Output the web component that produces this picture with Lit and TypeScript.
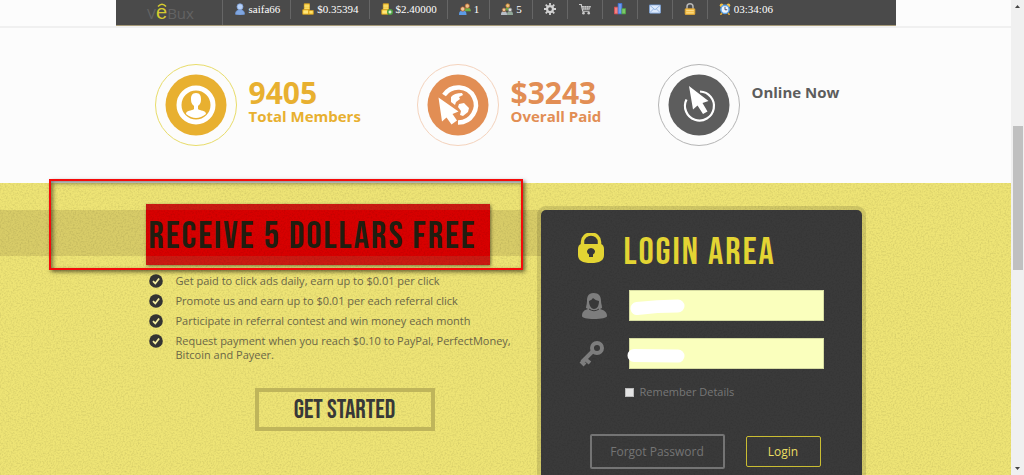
import { LitElement, html, css, svg } from "lit";
import { customElement } from "lit/decorators.js";

const icons = {
  user: svg`<path d="M2 15c0-4 2-6 6-6s6 2 6 6q-6 2-12 0z" fill="#7fa6e0" stroke="#6d95d6"/><circle cx="8" cy="5" r="4" fill="#b6d0f5" stroke="#7fa3dc"/>`,
  coins: svg`<path d="M3 1h7v8H3z" fill="#f4c834" stroke="#d9a21c"/><path d="M3 3h7M3 5h7M3 7h7" stroke="#fbe88a"/><path d="M1 9h8v6H1zM9 10h6v5H9z" fill="#ffd84a" stroke="#d9a21c"/><path d="M2 11h6M2 13h6M10 12h4" stroke="#fff0a0"/>`,
  coinsAdd: svg`<path d="M3 1h7v8H3z" fill="#f4c834" stroke="#d9a21c"/><path d="M3 3h7M3 5h7M3 7h7" stroke="#fbe88a"/><path d="M1 9h8v6H1z" fill="#ffd84a" stroke="#d9a21c"/><path d="M2 11h6M2 13h6" stroke="#fff0a0"/><circle cx="12" cy="12" r="4" fill="#4fa545"/><path d="M12 10v4M10 12h4" stroke="#fff" stroke-width="1.5"/>`,
  pair: svg`<path d="M7 11c0-3 1-5 4-5s5 2 5 5z" fill="#6cae45"/><circle cx="11" cy="4" r="3" fill="#efbd86" stroke="#a75b24"/><path d="M0 16c0-4 1-6 5-6s5 2 5 6z" fill="#5c9be6"/><circle cx="5" cy="8" r="3" fill="#f2c795" stroke="#9c4e24"/>`,
  group: svg`<path d="M5 10c0-3 1-4 4-4s4 1 4 4z" fill="#6cae45"/><circle cx="9" cy="3.500" r="2.500" fill="#efbd86" stroke="#c98a24"/><path d="M0 16c0-4 1-5 4-5s4 1 4 5z" fill="#b8bec6"/><circle cx="4" cy="9" r="2.500" fill="#f2c795" stroke="#8b5a39"/><path d="M8 16c0-4 1-5 4-5s4 1 4 5z" fill="#92a99a"/><circle cx="12" cy="9" r="2.500" fill="#ddd" stroke="#777"/>`,
  gear: svg`<circle cx="8" cy="8" r="4" fill="none" stroke="#d2d2d2" stroke-width="3"/><path d="M8 0v3M8 13v3M0 8h3M13 8h3M2.300 2.300l2.200 2.200M11.500 11.500l2.200 2.200M13.700 2.300l-2.200 2.200M4.500 11.500l-2.200 2.200" stroke="#d2d2d2" stroke-width="2.400"/>`,
  cart: svg`<path d="M0 2h3l2 9h9" fill="none" stroke="#ccc" stroke-width="1.600"/><path d="M3.500 4H16l-2 5H5z" fill="#c8c8c8"/><path d="M7 4v5M10 4v5M13 4v5M4 6.500h11" stroke="#777" stroke-width=".7"/><circle cx="6" cy="13.500" r="1.700" fill="#ccc"/><circle cx="13" cy="13.500" r="1.700" fill="#ccc"/>`,
  chart: svg`<path d="M0.500 5.500h5v9h-5z" fill="#f28080" stroke="#e04848"/><path d="M5.500 0.500h5v14h-5z" fill="#6c9cf0" stroke="#3a6fd8"/><path d="M10.500 7.500h5v7h-5z" fill="#7cc66b" stroke="#4aa53c"/>`,
  mail: svg`<rect x="0.500" y="2.500" width="15" height="11" rx="1" fill="#dce9fb" stroke="#6f9bd8"/><path d="M1 3l7 6 7-6M1 13l5-5M15 13l-5-5" fill="none" stroke="#7ea5dc"/>`,
  lock: svg`<path d="M4 8V5a4 4 0 0 1 8 0v3" fill="none" stroke="#b7b7b7" stroke-width="2"/><rect x="1.500" y="7.500" width="13" height="8" rx="1" fill="#f5c04a" stroke="#d9a034"/><path d="M3 10h10M3 13h10" stroke="#fde49a"/>`,
  clock: svg`<circle cx="3.500" cy="3" r="2.500" fill="#f2bd42"/><circle cx="12.500" cy="3" r="2.500" fill="#f2bd42"/><path d="M4 13l-2 3M12 13l2 3" stroke="#e0a530" stroke-width="2"/><circle cx="8" cy="8.500" r="5.500" fill="#eef6ff" stroke="#5aa2e6" stroke-width="2"/><path d="M8 5v4h3" fill="none" stroke="#445" stroke-width="1.200"/>`,
};

const toolbar = [
  { icon: icons.user, text: "saifa66", name: "Account" },
  { icon: icons.coins, text: "$0.35394", name: "Main balance" },
  { icon: icons.coinsAdd, text: "$2.40000", name: "Purchase balance" },
  { icon: icons.pair, text: "1", name: "Direct referrals" },
  { icon: icons.group, text: "5", name: "Rented referrals" },
  { icon: icons.gear, text: "", name: "Settings" },
  { icon: icons.cart, text: "", name: "Cart" },
  { icon: icons.chart, text: "", name: "Statistics" },
  { icon: icons.mail, text: "", name: "Messages" },
  { icon: icons.lock, text: "", name: "Log out" },
  { icon: icons.clock, text: "03:34:06", name: "Server time" },
];

const stats = [
  {
    tone: "gold",
    value: "9405",
    label: "Total Members",
    art: svg`<circle cx="41" cy="41" r="40.500" fill="none" stroke="#e8dc6a"/><circle cx="41" cy="41" r="30.500" fill="#e8b030"/><circle cx="41" cy="41" r="17" fill="none" stroke="#fff" stroke-width="5"/><path d="M41 29c-4 0-5 3-5 6 0 4 1 5 3 7v3c-2 2-8 1-8 5q5 4 10 4t10-4c0-4-6-3-8-5v-3c2-2 3-3 3-7 0-3-1-6-5-6z" fill="#fff"/>`,
  },
  {
    tone: "orange",
    value: "$3243",
    label: "Overall Paid",
    art: svg`<circle cx="41" cy="41" r="40.500" fill="none" stroke="#f4d3bd"/><circle cx="41" cy="41" r="30.500" fill="#e28e54"/><path d="M27 31A17.500 17.500 0 1 1 41 58.500" fill="none" stroke="#fff" stroke-width="4.500"/><path d="M34 33q3-4 11-4l1 2-4 2 1 2-4 3-1 3-4-3zM42 40l5-1 5 5-1 4-5 4-3-1 1-4-3-4z" fill="#fff"/><path d="M21.500 33.500l3.500 24 4.500-4 5 7 5.500-4-4.500-6.500 6-2.500z" fill="#fff"/>`,
  },
  {
    tone: "dark",
    value: "",
    label: "Online Now",
    art: svg`<circle cx="41" cy="41" r="40.500" fill="none" stroke="#b5b5b5"/><circle cx="41" cy="41" r="30.500" fill="#5d5d5d"/><path d="M42 27.500a14.500 14.500 0 1 1-13.500 8" fill="none" stroke="#fff" stroke-width="2.200"/><path d="M31 22l4 23.500 4.500-4 5.500 8.500 4.500-2.500-5-8.500 6-2z" fill="#fff"/>`,
  },
];

const benefits = [
  "Get paid to click ads daily, earn up to $0.01 per click",
  "Promote us and earn up to $0.01 per each referral click",
  "Participate in referral contest and win money each month",
  "Request payment when you reach $0.10 to PayPal, PerfectMoney, Bitcoin and Payeer.",
];

@customElement("app-root")
export class AppRoot extends LitElement {
  static styles = css`
    :host {
      --grain: url("data:image/svg+xml,%3Csvg xmlns='http://www.w3.org/2000/svg' width='160' height='160'%3E%3Cfilter id='n' x='0' y='0' width='1' height='1'%3E%3CfeTurbulence type='fractalNoise' baseFrequency='.6' numOctaves='2' stitchTiles='stitch'/%3E%3CfeColorMatrix values='0 0 0 0 0 0 0 0 0 0 0 0 0 0 0 .2 0 0 0 -.08'/%3E%3C/filter%3E%3Crect width='160' height='160' filter='url(%23n)'/%3E%3C/svg%3E");
      --display: "Bebas Neue", "Liberation Sans Narrow", "Liberation Sans", sans-serif;
      display: grid;
      grid-template-columns: minmax(0, 1fr) 13px;
      height: 100vh;
      overflow: hidden;
      font-family: "Open Sans", sans-serif;
      background: #fcfcfc;
    }
    * { box-sizing: border-box; }
    h1, h2, p, ul { margin: 0; padding: 0; }
    .page { display: flex; flex-direction: column; min-height: 0; overflow: hidden; }

    .top { border-bottom: 2px solid #f0f0f0; }
    .bar {
      display: flex;
      align-items: flex-start;
      width: 780px;
      max-width: 100%;
      height: 26px;
      margin: 0 auto;
      background: #4a4a4a;
      border-bottom: 1px solid #a69a78;
    }
    .logo {
      display: flex;
      align-items: baseline;
      justify-content: center;
      width: 107px;
      height: 25px;
      padding-left: 4px;
      border-right: 1px solid #666;
      font: 15px/26px "Open Sans", sans-serif;
      color: #636363;
      text-decoration: none;
    }
    .logo-e { position: relative; font: 20px/24px "Liberation Sans", sans-serif; color: #d6cb30; }
    .logo-hat { position: absolute; left: 1px; top: 3px; width: 10px; height: 4px; }
    .tools { display: flex; list-style: none; }
    .tool {
      display: flex;
      align-items: center;
      gap: 3px;
      height: 19px;
      padding: 0 10px 1px 11px;
      border-right: 1px solid #666;
      font: 11px/16px "Liberation Serif", serif;
      color: #fff;
    }
    .tool:last-child { border-right: 0; }
    .tool-only { padding-right: 11px; }
    .tool-icon { width: 12px; height: 12px; }
    .tool-text { padding-bottom: 1px; }

    .stats {
      display: grid;
      grid-template-columns: 262px 241px auto;
      width: 720px;
      max-width: 100%;
      margin: 0 auto;
      padding: 36px 0 37px 9px;
    }
    .stat { display: flex; gap: 12px; }
    .stat-art { width: 82px; height: 82px; flex: none; }
    .stat-text { padding-top: 13px; font-weight: 700; }
    .value { font-size: 30px; line-height: 31px; }
    .label { font-size: 15px; line-height: 16px; }
    .gold { color: #e8b030; }
    .orange { color: #e28e54; }
    .dark { color: #5d5d5d; }
    .dark .stat-text { padding-top: 20px; }

    .hero {
      position: relative;
      flex: 1;
      min-height: 0;
      background:
        var(--grain),
        linear-gradient(#d8cc68, #d8cc68) 0 27px / calc(50% + 36px) 46px no-repeat,
        #eee475;
    }
    .columns {
      display: grid;
      grid-template-columns: 391px 329px;
      justify-content: center;
      height: 100%;
    }
    .offer { padding-top: 21px; }
    .headline {
      width: 344px;
      height: 61px;
      padding-left: 3px;
      font: 400 38px/65px var(--display);
      letter-spacing: 2px;
      white-space: nowrap;
      color: #201e10;
      background: var(--grain), linear-gradient(#cb1a12 6px, #d80000 6px, #d80000 52px, #cb1a12 52px);
      box-shadow: 1px 1px 3px rgba(0, 0, 0, 0.5);
    }
    .benefits {
      display: grid;
      gap: 6px;
      padding: 9px 20px 0 3px;
      list-style: none;
      font-size: 11px;
      line-height: 14px;
      color: #6b6747;
    }
    .benefit { display: flex; gap: 13px; }
    .tick { width: 14px; height: 14px; flex: none; }
    .start {
      display: block;
      width: 180px;
      height: 43px;
      margin: 26px 0 0 109px;
      padding: 0;
      border: 4px solid #bfb55b;
      background: none;
      font: 400 26px/37px var(--display);
      white-space: nowrap;
      color: #383838;
    }
    .frame {
      position: absolute;
      left: calc(50% - 457px);
      top: -4px;
      width: 474px;
      height: 91px;
      border: 2px solid #f50a0a;
      box-shadow: 2px 2px 4px rgba(0, 0, 0, 0.55), inset 2px 2px 4px rgba(0, 0, 0, 0.5);
      pointer-events: none;
    }

    .login {
      margin: 27px 4px 0;
      padding: 23px 37px 0;
      border-radius: 5px 5px 0 0;
      background: var(--grain), #3a3a3a;
      box-shadow: 0 0 0 4px rgba(0, 0, 0, 0.12);
    }
    .login-title { display: flex; gap: 20px; align-items: flex-start; }
    .login-lock { width: 26px; height: 31px; }
    .login-name { font: 400 38px/40px var(--display); letter-spacing: 2px; color: #e3d433; white-space: nowrap; }
    .field { display: flex; align-items: center; gap: 21px; height: 31px; margin-top: 17px; padding-left: 1px; }
    .field-icon { display: block; width: 29px; height: 28px; }
    .box { position: relative; flex: 0 0 195px; height: 31px; }
    .input { width: 100%; height: 31px; border: 1px solid #d6dba1; background: #faffbd; padding: 4px; font-family: inherit; border-radius: 0; display: block; }
    .smear { position: absolute; left: -2px; top: 9px; width: 60px; height: 16px; pointer-events: none; }
    .remember { display: flex; gap: 6px; align-items: center; margin: 15px 0 0 47px; font-size: 11px; line-height: 16px; color: #777; }
    .check { appearance: none; width: 9px; height: 9px; margin: 0; background: #e4e4e4; border: 1px solid #bbb; }
    .actions { display: flex; align-items: center; gap: 21px; margin: 34px 0 0 12px; }
    .forgot {
      width: 135px;
      border: 2px solid #747474;
      border-radius: 2px;
      font-size: 12px;
      line-height: 31px;
      text-align: center;
      text-decoration: none;
      color: #747474;
    }
    .submit {
      width: 75px;
      height: 31px;
      padding: 0;
      border: 1px solid #cabd32;
      border-radius: 2px;
      background: none;
      font: 12px/28px "Open Sans", sans-serif;
      color: #eadf63;
    }

    .scroll { display: flex; flex-direction: column; align-items: center; padding: 5px 1px; background: #f0f0f0; }
    .scroll-arrow { width: 5px; height: 3px; flex: none; }
    .track { display: grid; grid-template-rows: 118fr 145fr 197fr; flex: 1; width: 10px; }
    .thumb { grid-row: 2; background: #c0c0c0; }
  `;

  render() {
    return html`
      <div class="page">
        <header class="top">
          <div class="bar">
            <a class="logo" href="#">V<span class="logo-e">e<svg class="logo-hat" viewBox="0 0 10 4"><path d="M1 3.500Q5-1 9 3.500" fill="none" stroke="#d6cb30" stroke-width="1.500"/></svg></span>Bux</a>
            <ul class="tools">
              ${toolbar.map((t) => html`<li class="tool ${t.text ? "" : "tool-only"}"><svg class="tool-icon" viewBox="0 0 16 16" role="img" aria-label=${t.name}>${t.icon}</svg>${t.text ? html`<span class="tool-text">${t.text}</span>` : ""}</li>`)}
            </ul>
          </div>
        </header>
        <section class="stats">
          ${stats.map((s) => html`
            <div class="stat ${s.tone}">
              <svg class="stat-art" viewBox="0 0 82 82">${s.art}</svg>
              <div class="stat-text">
                ${s.value ? html`<p class="value">${s.value}</p>` : ""}
                <p class="label">${s.label}</p>
              </div>
            </div>`)}
        </section>
        <main class="hero">
          <div class="columns">
            <section class="offer">
              <h1 class="headline">RECEIVE 5 DOLLARS FREE</h1>
              <ul class="benefits">
                ${benefits.map((b) => html`<li class="benefit"><svg class="tick" viewBox="0 0 14 14"><circle cx="7" cy="7" r="6.800" fill="#333"/><path d="M4 7.200l2.300 2.300 3.800-5" fill="none" stroke="#f3eda0" stroke-width="1.800"/></svg><span>${b}</span></li>`)}
              </ul>
              <button class="start" type="button">GET STARTED</button>
            </section>
            <form class="login">
              <div class="login-title">
                <svg class="login-lock" viewBox="0 0 26 31"><path d="M4.500 13V9a8.500 8 0 0 1 17 0v4" fill="none" stroke="#e3d433" stroke-width="3.500"/><path d="M3 11h20q3 1 3 5v6q0 8-13 8T0 22v-6q0-4 3-5z" fill="#e3d433"/><path d="M13 15a4 3.500 0 0 1 2 6.500V24h-4v-2.500A4 3.500 0 0 1 13 15z" fill="#383838"/></svg>
                <h2 class="login-name">LOGIN AREA</h2>
              </div>
              <div class="field">
                <label for="user"><svg class="field-icon" viewBox="0 0 29 28" role="img" aria-label="Username"><path d="M14.500 1C9 1 8 5 8 9c0 3-1 5-1 7l2 1c-4 1-6 3-6 7 0 2 5 3 12 3s13-1 13-3c0-4-3-6-7-7l2-1c0-3-1-4-1-7 0-5-2-8-7.500-8z" fill="#7d7d7d"/><path d="M10 9q3-1 4-3 3 3 6 3c0 5-2 8-5 8s-5-4-5-8z" fill="#383838"/><path d="M10 17q5 3.500 10 0" fill="none" stroke="#383838"/></svg></label>
                <div class="box">
                  <input class="input" id="user" type="text" />
                  <svg class="smear" viewBox="0 0 60 16"><path d="M10 9.500Q30 7 51 7" fill="none" stroke="#fff" stroke-width="13" stroke-linecap="round"/></svg>
                </div>
              </div>
              <div class="field">
                <label for="pass"><svg class="field-icon" viewBox="0 0 29 28" role="img" aria-label="Password"><circle cx="18" cy="8" r="5" fill="none" stroke="#7d7d7d" stroke-width="4"/><path d="M14 11L3 22M6 19l5 4M2 21l4 4" stroke="#7d7d7d" stroke-width="4"/></svg></label>
                <div class="box">
                  <input class="input" id="pass" type="password" />
                  <svg class="smear" viewBox="0 0 60 16"><path d="M7 8.500L51 9" fill="none" stroke="#fff" stroke-width="13" stroke-linecap="round"/></svg>
                </div>
              </div>
              <div class="remember"><input class="check" id="remember" type="checkbox" /><label for="remember">Remember Details</label></div>
              <div class="actions"><a class="forgot" href="#">Forgot Password</a><button class="submit" type="button">Login</button></div>
            </form>
          </div>
          <div class="frame"></div>
        </main>
      </div>
      <aside class="scroll" aria-hidden="true">
        <svg class="scroll-arrow" viewBox="0 0 5 3"><path d="M0 3L2.500 0 5 3z" fill="#444"/></svg>
        <div class="track"><div class="thumb"></div></div>
        <svg class="scroll-arrow" viewBox="0 0 5 3"><path d="M0 0l2.500 3L5 0z" fill="#444"/></svg>
      </aside>
    `;
  }
}
